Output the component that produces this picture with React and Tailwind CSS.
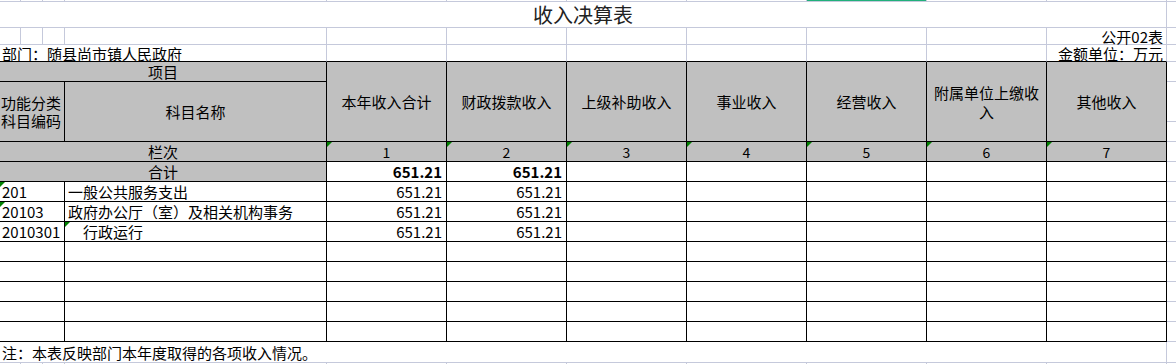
import React from 'react';

const GRID = 'border-[#c5c9db]';
const colsLight = ['w-[21px]', 'w-[22px]', 'w-[22px]', 'w-[262px]'];
const seven = [0, 1, 2, 3, 4, 5, 6];

const heads = ['本年收入合计', '财政拨款收入', '上级补助收入', '事业收入', '经营收入', ['附属单位上缴收', '入'], '其他收入'];

const rows = [
  { code: '201', name: '一般公共服务支出', v: ['651.21', '651.21'], markCode: true },
  { code: '20103', name: '政府办公厅（室）及相关机构事务', v: ['651.21', '651.21'], markCode: true },
  { code: '2010301', name: '行政运行', v: ['651.21', '651.21'], markName: true, indent: true },
  {}, {}, {}, {}, {},
];

const Mark = () => (
  <svg className="absolute left-0 top-0" width="5" height="5" viewBox="0 0 5 5">
    <polygon points="0,0 5,0 0,5" fill="#008000" />
  </svg>
);

// a plain spreadsheet row outside the table, light gridlines only
const LightRow = ({ h, children, green }) => (
  <div className={`flex ${h}`}>
    {colsLight.map((w, i) => (
      <div key={i} className={`${w} border-r border-b ${GRID}`} />
    ))}
    {seven.map(i => (
      <div key={i} className={`w-[120px] border-r border-b ${GRID} ${green && i === 4 ? 'bg-[#21b07a]' : ''}`} />
    ))}
    <div className={`w-[9px] border-b ${GRID}`} />
    {children}
  </div>
);

const App = () => {
  return (
    <div className="w-[1176px] h-[364px] overflow-hidden bg-white text-[15px] leading-none text-black font-['Noto_Sans_CJK_SC','Noto_Sans',sans-serif]">
      <LightRow h="h-[2px]" green />

      {/* title */}
      <div className="flex h-[26px]">
        <div className={`w-[1167px] border-r border-b ${GRID} flex items-end justify-center pb-[2px] text-[20px] text-[#222]`}>
          收入决算表
        </div>
        <div className={`w-[9px] border-b ${GRID}`} />
      </div>

      {/* 公开02表 */}
      <div className="flex h-[17px]">
        {colsLight.map((w, i) => (
          <div key={i} className={`${w} border-r border-b ${GRID}`} />
        ))}
        {[0, 1, 2, 3, 4, 5].map(i => (
          <div key={i} className={`w-[120px] border-r border-b ${GRID}`} />
        ))}
        <div className={`w-[120px] border-r border-b ${GRID} flex items-center justify-end pr-[3px]`}>公开02表</div>
        <div className={`w-[9px] border-b ${GRID}`} />
      </div>

      {/* 部门 / 金额单位 */}
      <div className="flex h-[17px]">
        <div className={`w-[327px] border-r ${GRID} border-b border-b-black flex items-center pl-[2px] whitespace-nowrap`}>
          部门：随县尚市镇人民政府
        </div>
        {[0, 1, 2, 3, 4, 5].map(i => (
          <div key={i} className={`w-[120px] border-r ${GRID} border-b border-b-black`} />
        ))}
        <div className={`w-[120px] border-r ${GRID} border-b border-b-black flex items-center justify-end pr-[3px] whitespace-nowrap`}>
          金额单位：万元
        </div>
        <div className={`w-[9px] border-b ${GRID}`} />
      </div>

      {/* header */}
      <div className="flex h-[80px]">
        <div className="flex w-[327px] flex-col">
          <div className="flex h-[20px] items-center justify-center border-r border-b border-black bg-[#c0c0c0]">项目</div>
          <div className="flex h-[60px]">
            <div className="flex w-[65px] flex-col justify-center border-r border-b border-black bg-[#c0c0c0] pl-[1px] leading-[18px]">
              <span>功能分类</span>
              <span>科目编码</span>
            </div>
            <div className="flex w-[262px] items-center justify-center border-r border-b border-black bg-[#c0c0c0]">科目名称</div>
          </div>
        </div>
        {heads.map((h, i) => (
          <div key={i} className="flex w-[120px] flex-col items-center justify-center border-r border-b border-black bg-[#c0c0c0] leading-[19px]">
            {Array.isArray(h) ? h.map(t => <span key={t}>{t}</span>) : <span>{h}</span>}
          </div>
        ))}
        <div className="flex w-[9px] flex-col">
          <div className={`h-[20px] border-b ${GRID}`} />
          <div className={`h-[40px] border-b ${GRID}`} />
          <div className={`h-[20px] border-b ${GRID}`} />
        </div>
      </div>

      {/* 栏次 */}
      <div className="flex h-[20px]">
        <div className="flex w-[327px] items-center justify-center border-r border-b border-black bg-[#c0c0c0]">栏次</div>
        {seven.map(i => (
          <div key={i} className="relative flex w-[120px] items-center justify-center border-r border-b border-black bg-[#c0c0c0] text-[14px]">
            <Mark />
            {i + 1}
          </div>
        ))}
        <div className={`w-[9px] border-b ${GRID}`} />
      </div>

      {/* 合计 */}
      <div className="flex h-[20px]">
        <div className="flex w-[327px] items-center justify-center border-r border-b border-black bg-[#c0c0c0]">合计</div>
        {seven.map(i => (
          <div key={i} className="flex w-[120px] items-center justify-end border-r border-b border-black pr-[4px] font-bold">
            {i < 2 ? '651.21' : ''}
          </div>
        ))}
        <div className={`w-[9px] border-b ${GRID}`} />
      </div>

      {rows.map((r, idx) => (
        <div key={idx} className="flex h-[20px]">
          <div className="relative flex w-[65px] items-center border-r border-b border-black pl-[2px]">
            {r.markCode && <Mark />}
            {r.code}
          </div>
          <div className={`relative flex w-[262px] items-center border-r border-b border-black whitespace-nowrap ${r.indent ? 'pl-[18px]' : 'pl-[3px]'}`}>
            {r.markName && <Mark />}
            {r.name}
          </div>
          {seven.map(i => (
            <div key={i} className="flex w-[120px] items-center justify-end border-r border-b border-black pr-[4px]">
              {r.v && i < 2 ? r.v[i] : ''}
            </div>
          ))}
          <div className={`w-[9px] border-b ${GRID}`} />
        </div>
      ))}

      {/* note */}
      <div className="flex h-[21px]">
        <div className={`flex w-[1167px] items-center border-r border-b ${GRID} pl-[2px]`}>
          注：本表反映部门本年度取得的各项收入情况。
        </div>
        <div className={`w-[9px] border-b ${GRID}`} />
      </div>

      <LightRow h="h-[2px]" />
    </div>
  );
};

export default App;
